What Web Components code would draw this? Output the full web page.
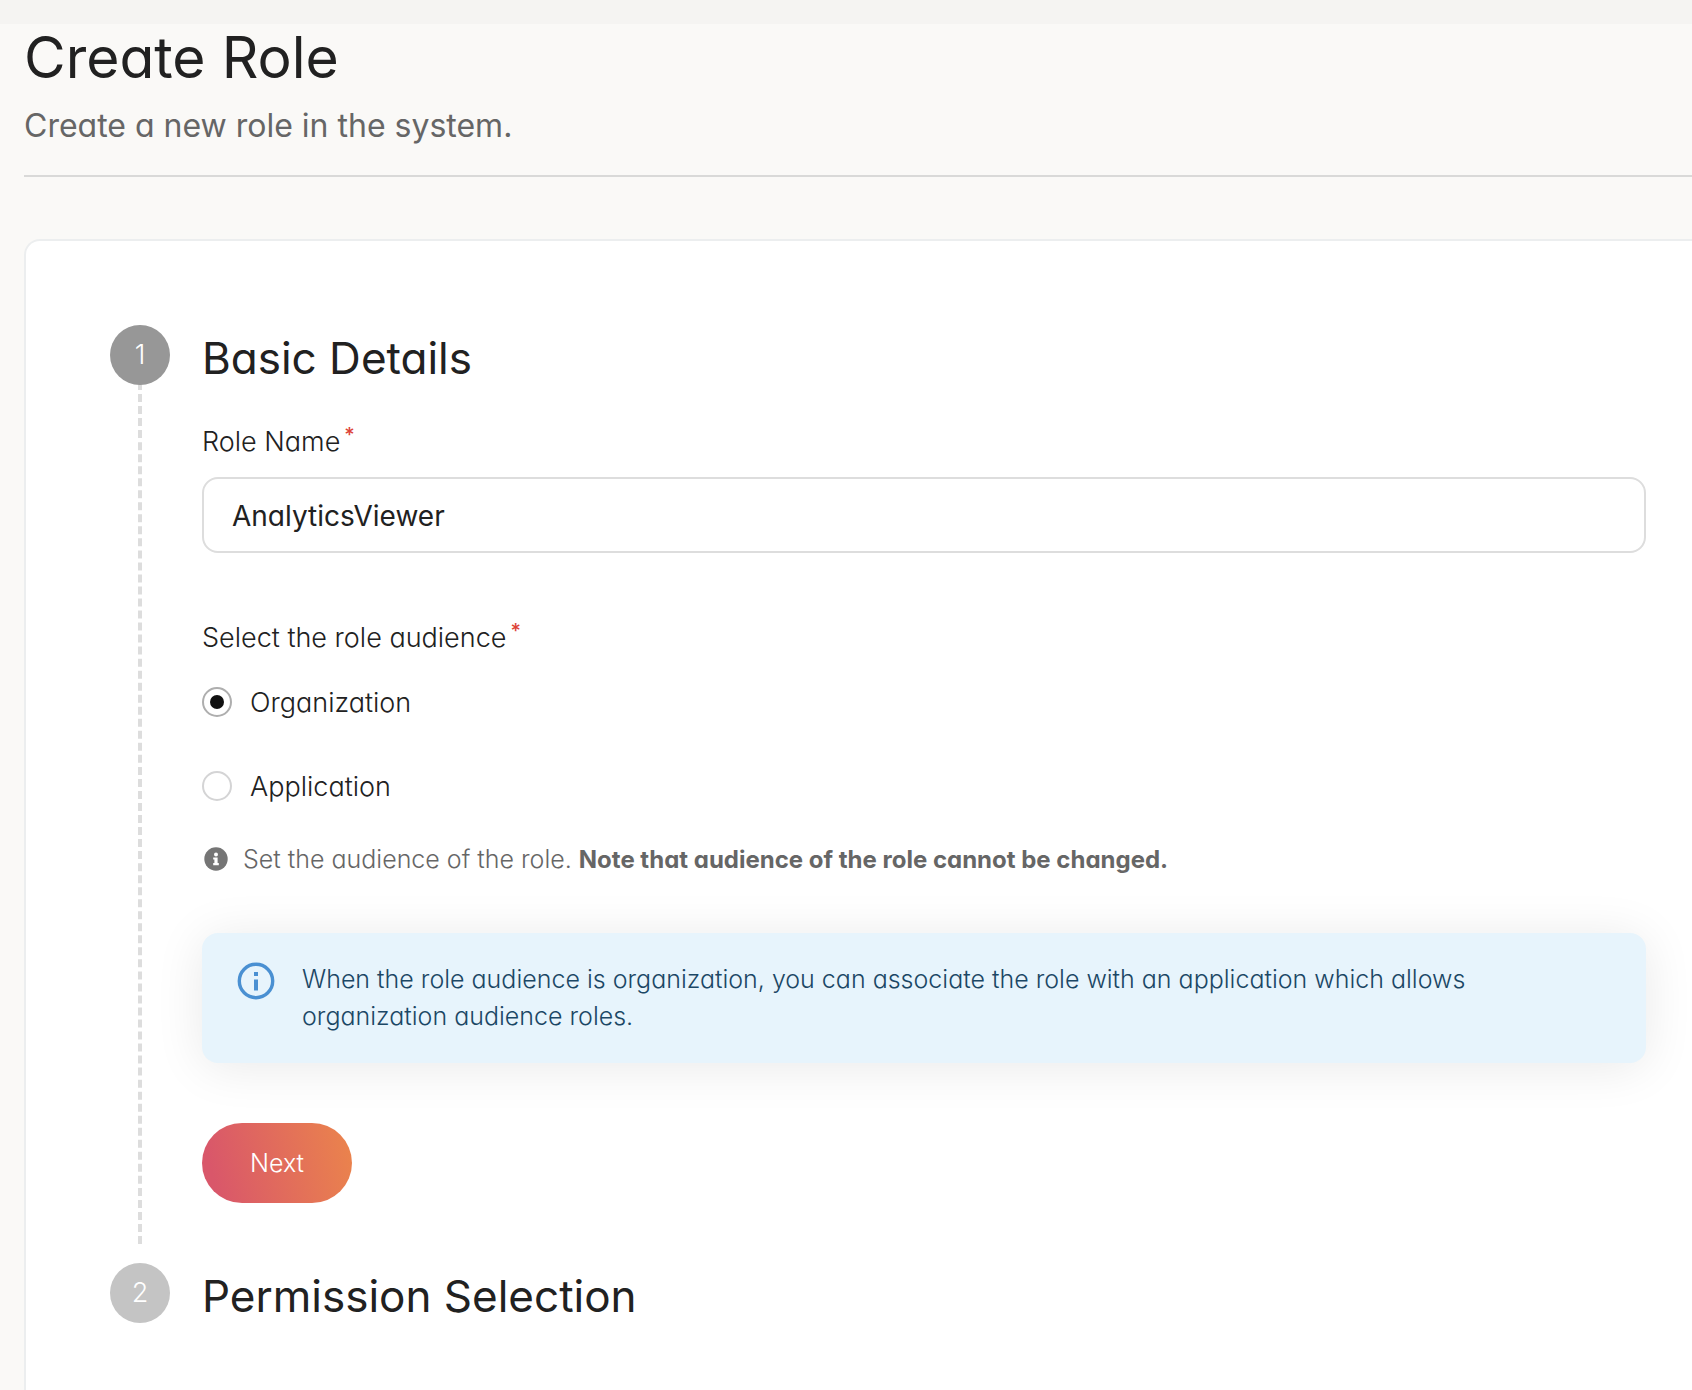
<!DOCTYPE html>
<html lang="en">
<head>
<meta charset="utf-8">
<title>Create Role</title>
<style>
  html { height: 100%; }
  body {
    margin: 0;
    min-height: 100%;
    display: flex;
    flex-direction: column;
    overflow: hidden;
    background: #faf9f7;
    color: #212121;
    font-family: Inter, "Open Sans", sans-serif;
    font-feature-settings: "cv11";
  }
  body > role-page { flex: 1; }
</style>
</head>
<body>
<role-page>
  <page-header slot="header">
    <span slot="title">Create Role</span>
    <span slot="description">Create a new role in the system.</span>
  </page-header>
  <wizard-step number="1" current>
    <span slot="title">Basic Details</span>
    <text-field label="Role Name" name="role" value="AnalyticsViewer"></text-field>
    <audience-picker></audience-picker>
    <field-hint>Set the audience of the role. <b>Note that audience of the role cannot be changed.</b></field-hint>
    <info-banner>When the role audience is organization, you can associate the role with an application which allows organization audience roles.</info-banner>
    <primary-button>Next</primary-button>
  </wizard-step>
  <wizard-step number="2">
    <span slot="title">Permission Selection</span>
  </wizard-step>
</role-page>

<script>
const define = (name, render) => customElements.define(name, class extends HTMLElement {
  constructor() {
    super();
    this.attachShadow({ mode: "open" });
  }
  connectedCallback() {
    this.shadowRoot.innerHTML = render(this);
  }
});

define("role-page", () => `
  <style>
    :host { display: flex; flex-direction: column; }
    .bar { height: 24px; background: #f5f4f2; }
    main { flex: 1; display: flex; flex-direction: column; padding-left: 24px; }
    .card {
      flex: 1;
      margin-top: 62px;
      padding: 84px 46px 66px 84px;
      background: #fff;
      border: 2px solid #eceeef;
      border-width: 2px 0 0 2px;
      border-top-left-radius: 16px;
    }
  </style>
  <div class="bar"></div>
  <main>
    <slot name="header"></slot>
    <section class="card"><slot></slot></section>
  </main>`);

define("page-header", () => `
  <style>
    :host { display: block; padding-bottom: 28px; border-bottom: 2px solid #d9d9d8; }
    h1 { margin: 0; font-size: 57px; line-height: 67px; font-weight: 400; }
    p { margin: 13px 0 0; font-size: 32px; line-height: 43px; color: #666; }
  </style>
  <h1><slot name="title"></slot></h1>
  <p><slot name="description"></slot></p>`);

define("wizard-step", el => `
  <style>
    :host { display: grid; grid-template-columns: 60px minmax(0, 1fr); column-gap: 32px; }
    .rail { display: flex; flex-direction: column; align-items: center; }
    .dot {
      width: 60px; height: 60px; border-radius: 50%; z-index: 1;
      display: flex; align-items: center; justify-content: center;
      background: #c4c4c4; color: #fff; font-size: 27px; line-height: 34px; font-weight: 300;
    }
    :host([current]) .dot { background: #979797; }
    .line { flex: 1; margin: -3px 0 19px; border-left: 4px dashed #ddd; }
    :host(:not([current])) .line { display: none; }
    :host([current]) .body { padding-bottom: 60px; }
    h2 { margin: 0; font-size: 44px; line-height: 67px; font-weight: 400; }
  </style>
  <div class="rail"><div class="dot">${el.getAttribute("number")}</div><div class="line"></div></div>
  <div class="body"><h2><slot name="title"></slot></h2><slot></slot></div>`);

const labelStyles = `
  .label { font-size: 27px; font-weight: 300; line-height: 34px; display: flex; gap: 4px; }
  .label i { font-style: normal; font-size: 20px; font-weight: 500; line-height: 20px; color: #dd4438; }`;

define("text-field", el => `
  <style>
    :host { display: block; margin-top: 33px; }
    ${labelStyles}
    input {
      box-sizing: border-box; width: 100%; height: 76px; margin: 18px 0 0; padding: 2px 28px 0;
      border: 2px solid #ddd; border-radius: 16px; background: #fff; outline: 0;
      font: inherit; font-feature-settings: inherit; font-size: 28px; color: #212121;
    }
  </style>
  <label class="label" for="field">${el.getAttribute("label")}<i>*</i></label>
  <input id="field" type="text" name="${el.getAttribute("name")}" value="${el.getAttribute("value")}" required>`);

define("audience-picker", () => `
  <style>
    :host { display: block; margin-top: 68px; }
    ${labelStyles}
    fieldset { margin: 0; padding: 0; border: 0; min-width: 0; }
    legend { padding: 0; }
    .options { display: flex; flex-direction: column; gap: 54px; padding-top: 32px; }
    .option { display: flex; align-items: center; gap: 18px; height: 30px; }
    .option label { font-size: 27px; font-weight: 300; line-height: 34px; padding-top: 2px; }
    input {
      appearance: none; box-sizing: border-box; width: 30px; height: 30px; margin: 0;
      border: 2px solid #d4d4d5; border-radius: 50%; background: #fff;
      display: grid; place-content: center;
    }
    input:checked { border-color: #aeaeae; }
    input:checked::before { content: ""; width: 14px; height: 14px; border-radius: 50%; background: #111; }
  </style>
  <fieldset>
    <legend class="label">Select the role audience<i>*</i></legend>
    <div class="options">
      <div class="option"><input type="radio" name="audience" id="org" checked><label for="org">Organization</label></div>
      <div class="option"><input type="radio" name="audience" id="app"><label for="app">Application</label></div>
    </div>
  </fieldset>`);

define("field-hint", () => `
  <style>
    :host { display: flex; align-items: center; margin-top: 40px; padding-left: 2px; gap: 15px; font-size: 25px; line-height: 36px; font-weight: 300; color: #666; }
    svg { flex: none; width: 24px; height: 24px; }
    ::slotted(b) { font-size: 24px; line-height: 24px; font-weight: 700; }
  </style>
  <svg viewBox="0 0 24 24" aria-hidden="true">
    <circle cx="12" cy="12" r="11.7" fill="#757575"/>
    <circle cx="12" cy="7.4" r="2" fill="#fff"/>
    <path d="M9.2 10.4h4.4v5.6h1.2v2.2H9.2V16h1.2v-3.4H9.2z" fill="#fff"/>
  </svg>
  <span><slot></slot></span>`);

define("info-banner", () => `
  <style>
    :host {
      display: flex; align-items: flex-start; gap: 26px; margin-top: 56px; padding: 28px 92px 28px 34px;
      background: #e7f4fc; border-radius: 16px; box-shadow: 0 4px 50px rgba(0, 0, 0, .09);
      font-size: 25px; line-height: 37px; font-weight: 300; color: #1b4765;
    }
    svg { flex: none; width: 40px; height: 40px; }
  </style>
  <svg viewBox="0 0 40 40" aria-hidden="true">
    <circle cx="20" cy="20" r="16.7" fill="none" stroke="#4a90d2" stroke-width="3.4"/>
    <path d="M18 11h4v4h-4zM18 18.500h4v11h-4z" fill="#4a90d2"/>
  </svg>
  <span><slot></slot></span>`);

define("primary-button", () => `
  <style>
    :host { display: block; margin-top: 60px; }
    button {
      height: 80px; padding: 0 48px; border: 0; border-radius: 40px;
      background: linear-gradient(77deg, #d9576a 10%, #ea824d 95%);
      font: inherit; font-feature-settings: inherit; font-size: 25px; font-weight: 300; color: #fff;
    }
  </style>
  <button type="button"><slot></slot></button>`);
</script>
</body>
</html>
